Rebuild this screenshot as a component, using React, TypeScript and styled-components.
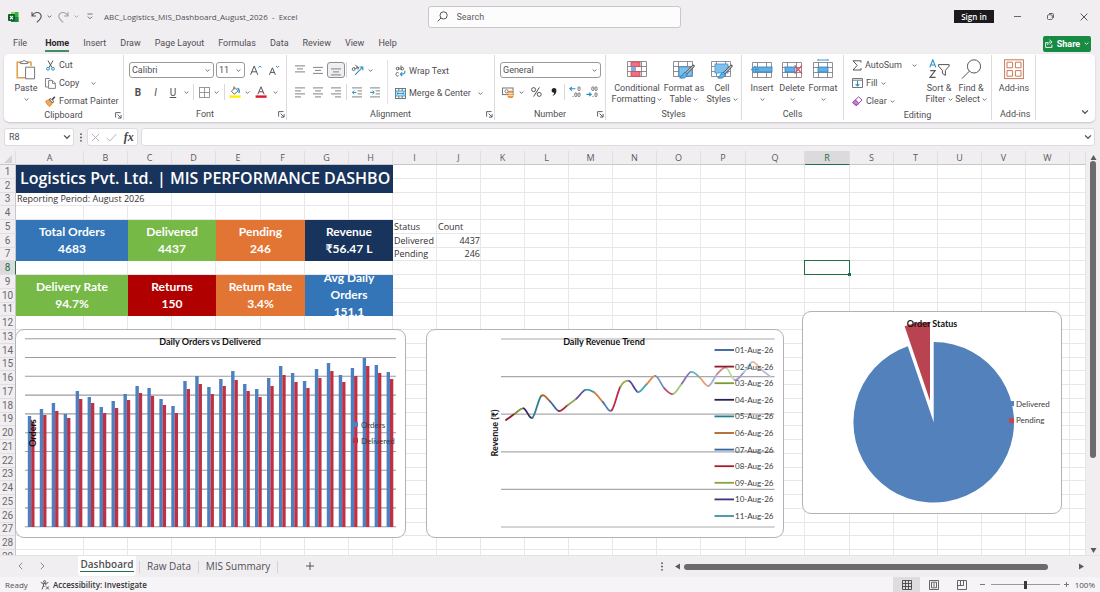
import React from "react";
import styled, { createGlobalStyle, css } from "styled-components";

const ui = `Roboto, "Open Sans", sans-serif`;
const cellFont = `"Open Sans", "Noto Sans", sans-serif`;
const sheetFont = `Lato, "Noto Sans", sans-serif`;
const green = "#1e7145";
const ink = "#504e52";
const line = "#767478";
const blue = "#2b8fc6";

const Global = createGlobalStyle`
  *, *::before, *::after { box-sizing: border-box; }
  html, body, #root { height: 100%; }
  body { margin: 0; background: #f1eef2; color: ${ink}; font-family: ${ui}; font-size: 9px; }
  button, input, select { font: inherit; color: inherit; margin: 0; }
  svg { display: block; flex: none; }
`;

/* ---------- shared pieces ---------- */

const Shell = styled.div`
  display: flex;
  flex-direction: column;
  height: 100vh;
  min-height: 360px;
  overflow: hidden;
`;

const Button = styled.button<{ $w?: number }>`
  display: inline-flex;
  align-items: center;
  justify-content: center;
  flex: none;
  width: ${(p) => (p.$w ? `${p.$w}px` : "auto")};
  height: 16px;
  padding: 0;
  border: 0;
  background: none;
  white-space: nowrap;
`;

const Row = styled.div<{ $gap?: number }>`
  display: flex;
  align-items: center;
  gap: ${(p) => p.$gap ?? 0}px;
`;

const Divider = styled.span<{ $h: number; $m: number }>`
  flex: none;
  width: 1px;
  height: ${(p) => p.$h}px;
  margin: 0 ${(p) => p.$m}px;
  background: #d9d7da;
`;

const Chevron = ({ size = 5, color = "#555" }: { size?: number; color?: string }) => (
  <svg width={size} height={size} viewBox="0 0 6 6" fill="none" stroke={color} strokeWidth="1">
    <path d="M0.8 1.8 3 4 5.2 1.8" />
  </svg>
);

/* ---------- title bar ---------- */

const TitleBar = styled.header`
  flex: none;
  display: grid;
  grid-template-columns: 1fr minmax(120px, 253px) 1fr;
  align-items: center;
  height: 33px;
  padding-left: 8px;
`;

const UndoButton = styled(Button)`
  margin-left: 8px;
`;

const FileName = styled.span`
  margin-left: 3px;
  font-family: ${cellFont};
  font-size: 8px;
  white-space: pre;
`;

const SearchBox = styled.label`
  display: flex;
  align-items: center;
  gap: 9px;
  height: 22px;
  padding: 0 8px;
  border: 1px solid #c9c7ca;
  border-radius: 3px;
  background: #fdfcfd;
  input {
    flex: 1;
    min-width: 0;
    padding: 0;
    border: 0;
    outline: 0;
    background: none;
  }
  input::placeholder { color: #5f5d61; opacity: 1; }
`;

const WindowControls = styled.div`
  display: flex;
  align-items: center;
  justify-content: flex-end;
`;

const SignIn = styled.button`
  height: 13px;
  width: 40px;
  margin-right: 7px;
  padding: 0;
  border: 0;
  background: #1c1a1e;
  color: #fff;
  font-family: ${cellFont};
  font-size: 8px;
  font-weight: 600;
  line-height: 13px;
`;

/* ---------- ribbon tabs ---------- */

const TabRow = styled.nav`
  flex: none;
  display: flex;
  align-items: center;
  gap: 14px;
  height: 21px;
  padding: 0 9px 0 13px;
`;

const MenuTab = styled.button<{ $active?: boolean }>`
  height: 17px;
  padding: 2px 0 0;
  border: 0;
  background: none;
  white-space: nowrap;
  line-height: 13px;
  border-bottom: 2px solid transparent;
  ${(p) =>
    p.$active &&
    css`
      font-weight: 700;
      color: #2a282c;
      border-bottom-color: #3f8f63;
    `}
`;

const FirstTab = styled(MenuTab)`
  margin-right: 4px;
`;

const Share = styled.button`
  display: flex;
  align-items: center;
  justify-content: center;
  gap: 4px;
  width: 48px;
  height: 16px;
  margin-left: auto;
  padding: 0;
  border: 0;
  border-radius: 2px;
  background: #178a43;
  color: #fff;
  font-weight: 700;
`;

/* ---------- ribbon ---------- */

const Ribbon = styled.section`
  flex: none;
  display: flex;
  height: 68px;
  margin: 0 5px 0 4px;
  padding: 1px 0 2px;
  border-radius: 5px;
  background: #fff;
  box-shadow: 0 1px 2px #c4c2c6;
`;

const Group = styled.div<{ $w: number }>`
  flex: none;
  display: flex;
  flex-direction: column;
  width: ${(p) => p.$w}px;
  border-right: 1px solid #dddbde;
`;

const GroupBody = styled.div<{ $pad: number }>`
  display: flex;
  height: 55px;
  padding-left: ${(p) => p.$pad}px;
`;

const GroupLabel = styled.div`
  display: grid;
  grid-template-columns: 8px 1fr 8px;
  align-items: center;
  height: 11px;
  line-height: 11px;
  text-align: center;
  white-space: nowrap;
`;

const Stack = styled.div<{ $gap?: number; $top?: number; $left?: number }>`
  display: flex;
  flex-direction: column;
  align-items: flex-start;
  gap: ${(p) => p.$gap ?? 0}px;
  padding-top: ${(p) => p.$top ?? 0}px;
  padding-left: ${(p) => p.$left ?? 0}px;
`;

const EditStack = styled(Stack)`
  width: 71px;
`;

const Command = styled(Button)`
  gap: 3px;
  height: 18px;
`;

const IconSlot = styled.span`
  display: flex;
  justify-content: center;
  width: 12px;
`;

const TallRule = styled.span`
  width: 1px;
  height: 44px;
  margin: 5px 7px 0 3px;
  background: #e2e0e3;
`;

const BigButton = styled.button<{ $w: number }>`
  display: flex;
  flex-direction: column;
  align-items: center;
  flex: none;
  width: ${(p) => p.$w}px;
  padding: 4px 0 0;
  border: 0;
  background: none;
  line-height: 11px;
  white-space: nowrap;
  svg.big { margin-bottom: 3px; }
`;

const LabelLine = styled.span`
  display: flex;
  align-items: center;
  gap: 2px;
  height: 11px;
`;

const SelectShell = styled.label<{ $w: number }>`
  display: flex;
  align-items: center;
  width: ${(p) => p.$w}px;
  height: 16px;
  padding: 0 3px 0 2px;
  border: 1px solid #9b999c;
  border-radius: 3px;
  background: #fff;
  select {
    flex: 1;
    min-width: 0;
    padding: 0;
    border: 0;
    outline: 0;
    background: none;
    appearance: none;
  }
`;

const Pressed = styled(Button)`
  border: 1px solid #8f8d90;
  border-radius: 3px;
  background: #efeef0;
`;

const Glyph = styled.span<{ $bold?: boolean; $italic?: boolean; $under?: boolean }>`
  font-size: 10px;
  font-weight: ${(p) => (p.$bold ? 700 : 400)};
  font-style: ${(p) => (p.$italic ? "italic" : "normal")};
  text-decoration: ${(p) => (p.$under ? "underline" : "none")};
`;

const CollapseCell = styled.div`
  display: flex;
  flex: 1;
  align-items: flex-end;
  justify-content: flex-end;
  padding-right: 5px;
`;

const Launcher = () => (
  <svg width="7" height="7" viewBox="0 0 7 7" fill="none" stroke="#555" strokeWidth="0.9">
    <path d="M0.6 5.6V0.6H5.6M2.6 2.6 6 6M6.1 3V6.1H3" />
  </svg>
);

const PasteIcon = () => (
  <svg className="big" width="20" height="21" viewBox="0 0 20 21" fill="none">
    <path d="M4.5 3.2H1.2V18.8H9M11.5 3.2H15V7" stroke="#e0a044" strokeWidth="1.5" />
    <path d="M4.4 4.6V2.8H6.3C6.6 1.2 9.6 1.2 9.9 2.8H11.8V4.6Z" stroke={line} fill="#fff" />
    <path d="M9.6 8.2H18.6V19.8H9.6Z" stroke={line} fill="#fff" />
  </svg>
);

const CutIcon = () => (
  <svg width="9" height="11" viewBox="0 0 9 11" fill="none">
    <path d="M2 0.5 6 7.6M7 0.5 3 7.6" stroke="#555" />
    <circle cx="2" cy="8.8" r="1.4" stroke={blue} />
    <circle cx="7" cy="8.8" r="1.4" stroke={blue} />
  </svg>
);

const CopyIcon = () => (
  <svg width="11" height="11" viewBox="0 0 11 11" fill="#fff" stroke={line} strokeWidth="0.9">
    <path d="M3.4 9H0.5V0.5H4.6L5.6 1.5" />
    <path d="M3.6 2.6H7.6L10.4 5.2V10.4H3.6Z" />
    <path d="M7.5 2.8V5.4H10.2" />
  </svg>
);

const PainterIcon = () => (
  <svg width="11" height="11" viewBox="0 0 11 11" fill="none">
    <path d="M0.6 5.2 4.4 3.6 7.6 6.8 5 10.4C3.4 10 1.4 8 0.6 5.2Z" fill="#f3a94f" stroke="#d2802a" strokeWidth="0.8" />
    <path d="M4.2 3.4 6 2.6 8.6 5.2 7.6 7Z" fill="#fff" stroke="#444" strokeWidth="0.9" />
    <path d="M7.2 3.8 9.8 0.8" stroke="#444" strokeWidth="1.6" />
  </svg>
);

const BordersIcon = () => (
  <svg width="11" height="11" viewBox="0 0 11 11" fill="none" stroke="#8f8d90" strokeWidth="0.9">
    <rect x="0.5" y="0.5" width="10" height="10" />
    <path d="M5.5 0.5V10.5M0.5 5.5H10.5" />
  </svg>
);

const FillIcon = () => (
  <svg width="12" height="12" viewBox="0 0 12 12" fill="none">
    <path d="M2.4 5.2 6 1.6 9 4.8 5.4 8.2Z" stroke="#555" strokeWidth="0.9" />
    <path d="M5 0.4V3.6" stroke="#555" strokeWidth="0.9" />
    <path d="M8.4 2.2C10.6 3 10.6 5.6 9.8 7" stroke={blue} strokeWidth="1.4" />
    <rect x="0.6" y="9.4" width="11" height="2.4" fill="#ffee00" />
  </svg>
);

const FontColorIcon = () => (
  <svg width="12" height="12" viewBox="0 0 12 12" fill="none">
    <path d="M2.8 8.4 6 0.8 9.2 8.4M4 5.8H8" stroke="#555" strokeWidth="1" />
    <rect x="0.6" y="9.4" width="11" height="2.4" fill="#e3162b" />
  </svg>
);

const GrowFont = ({ up }: { up?: boolean }) => (
  <svg width="12" height="11" viewBox="0 0 12 11" fill="none">
    <path d={up ? "M0.6 9.8 4.2 1 7.8 9.8M1.9 6.8H6.5" : "M1.4 9.8 4.4 2.8 7.4 9.8M2.4 7.4H6.4"} stroke="#555" />
    <path d={up ? "M8.4 2.6 9.9 1 11.4 2.6" : "M8 1 9.5 2.6 11 1"} stroke={blue} />
  </svg>
);

type LineSpec = [number, number, number];
const Lines = ({ rows }: { rows: LineSpec[] }) => (
  <svg width="10" height="11" viewBox="0 0 10 11" stroke={line} strokeWidth="0.9">
    {rows.map(([x1, x2, y]) => (
      <path key={y} d={`M${x1} ${y}H${x2}`} />
    ))}
  </svg>
);

const Indent = ({ right }: { right?: boolean }) => (
  <svg width="10" height="11" viewBox="0 0 10 11" fill="none">
    <path d="M0 0.9H10M5.6 3.9H10M5.6 6.9H10M0 9.9H10" stroke={line} strokeWidth="0.9" />
    <path d={right ? "M0 5.4H4M2.4 3.6 4.3 5.4 2.4 7.2" : "M4.4 5.4H0.6M2 3.6 0.4 5.4 2 7.2"} stroke={blue} />
  </svg>
);

const OrientationIcon = () => (
  <svg width="13" height="12" viewBox="0 0 13 12" fill="none">
    <circle cx="2.6" cy="5.2" r="1.4" stroke="#555" strokeWidth="0.9" />
    <path d="M3 3.2 4.8 5M4.4 0.8 7 4" stroke="#555" strokeWidth="0.9" />
    <circle cx="6.6" cy="4" r="1.1" stroke="#555" strokeWidth="0.8" />
    <path d="M4 10.8 11.4 3.4M8.6 3H11.8V6.2" stroke={blue} strokeWidth="1.1" />
  </svg>
);

const WrapIcon = () => (
  <svg width="11" height="12" viewBox="0 0 11 12" fill="none" stroke="#555" strokeWidth="0.9">
    <path d="M3.9 2.2V5M6 0.4V5" />
    <circle cx="2.5" cy="3.6" r="1.3" />
    <circle cx="7.3" cy="3.7" r="1.3" />
    <path d="M3.6 8C2.2 7 0.8 8 0.8 9.3S2.2 11.6 3.6 10.6" />
    <path d="M9.8 5.6C10.4 8 9.2 9.2 5.6 9.2M7.2 7.4 5.4 9.2 7.2 11" stroke={blue} strokeWidth="1.1" />
  </svg>
);

const MergeIcon = () => (
  <svg width="11" height="11" viewBox="0 0 11 11" fill="none">
    <rect x="0.5" y="0.5" width="10" height="10" stroke={line} fill="#fff" />
    <path d="M3.8 0.5V3M7.2 0.5V3M3.8 8V10.5M7.2 8V10.5" stroke={line} />
    <rect x="0.8" y="3" width="9.4" height="5" fill="#cfe8f7" stroke={blue} strokeWidth="0.8" />
    <path d="M2 5.5H9M3.4 4.2 2 5.5 3.4 6.8M7.6 4.2 9 5.5 7.6 6.8" stroke={blue} strokeWidth="0.9" />
  </svg>
);

const CurrencyIcon = () => (
  <svg width="12" height="11" viewBox="0 0 12 11" fill="none">
    <rect x="0.5" y="1" width="10.5" height="6.6" stroke={line} />
    <circle cx="4.6" cy="4.3" r="1.6" stroke={line} strokeWidth="0.9" />
    <rect x="6" y="4.2" width="5" height="6.2" rx="1" fill="#f1a04c" stroke="#d5781d" strokeWidth="0.8" />
    <path d="M6 6.4H11M6 8.4H11" stroke="#fff" strokeWidth="0.7" />
  </svg>
);

const PercentIcon = () => (
  <svg width="11" height="10" viewBox="0 0 11 10" fill="none" stroke="#555" strokeWidth="1">
    <circle cx="2.6" cy="2.6" r="2" />
    <circle cx="8.2" cy="7.4" r="2" />
    <path d="M8.4 0.4 2.6 9.6" />
  </svg>
);

const CommaIcon = () => (
  <svg width="6" height="10" viewBox="0 0 6 10" fill="#222">
    <path d="M3 1C4.7 1 5.6 2.2 5.4 4 5.2 6.4 3.6 8.4 1.4 9 2.6 7.8 3.2 6.6 3.2 5.6 1.6 5.8 0.6 4.8 0.6 3.4 0.6 2 1.6 1 3 1Z" />
  </svg>
);

const DecimalIcon = ({ right }: { right?: boolean }) => (
  <svg width="12" height="12" viewBox="0 0 12 12" fill="none" stroke="#666" strokeWidth="0.9">
    <rect x="9" y="0.8" width="2" height="3.8" rx="1" />
    {right && <rect x="5.8" y="0.8" width="2" height="3.8" rx="1" />}
    <rect x="9" y="6.8" width="2" height="3.8" rx="1" />
    {!right && <rect x="5.8" y="6.8" width="2" height="3.8" rx="1" />}
    <path d={right ? "M7 10V11" : "M4 10V11"} />
    <path d={right ? "M0.4 8.4H5M3.2 6.6 5.2 8.4 3.2 10.2" : "M6.4 2.8H1M2.8 1 0.8 2.8 2.8 4.6"} stroke={blue} strokeWidth="1.1" />
  </svg>
);

const gridPath = "M0.5 1.5H19.5V16.5H0.5ZM0.5 6.5H19.5M0.5 11.5H19.5M5.5 1.5V16.5M14.5 1.5V16.5";

const ConditionalIcon = () => (
  <svg className="big" width="20" height="21" viewBox="0 0 20 21" fill="none">
    <path d={gridPath} transform="translate(0 1)" stroke={line} strokeWidth="0.8" />
    <rect x="4" y="3" width="9" height="4.5" fill="#ee7183" stroke="#dc3f58" strokeWidth="0.8" />
    <rect x="4" y="7.8" width="5" height="4.4" fill="#6fb7e8" />
    <rect x="4" y="12.6" width="9" height="4.6" fill="#ee7183" stroke="#dc3f58" strokeWidth="0.8" />
  </svg>
);

const Brush = () => (
  <>
    <path d="M20.4 7 13 14.4" stroke="#555" strokeWidth="2.6" strokeLinecap="round" />
    <path d="M20.2 7.2 13.2 14.2" stroke="#fff" strokeWidth="1" strokeLinecap="round" />
    <path d="M12.8 13.4C10.4 12.8 10.2 16 6.6 18.8 10 20 14 18.8 14.2 15Z" fill="#5fb0e6" stroke="#2574ad" strokeWidth="0.8" />
  </>
);

const TableStyleIcon = ({ cell }: { cell?: boolean }) => (
  <svg className="big" width="22" height="21" viewBox="0 0 22 21" fill="none">
    <path d={gridPath} transform="translate(0 1)" stroke={line} strokeWidth="0.8" />
    {cell ? (
      <rect x="4" y="5" width="13" height="9" fill="#7dc0ee" stroke="#3f93cb" strokeWidth="0.8" />
    ) : (
      <path d="M6 8H19V17H6Z" fill="#7dc0ee" stroke="#3f93cb" strokeWidth="0.8" />
    )}
    <Brush />
  </svg>
);

const CellsIcon = ({ kind }: { kind: "insert" | "delete" | "format" }) => (
  <svg className="big" width="22" height="21" viewBox="0 0 22 21" fill="none">
    <path d={gridPath} transform="translate(1 2)" stroke={line} strokeWidth="0.8" />
    <rect x={kind === "format" ? 6 : 4} y="8" width={kind === "insert" ? 17 : 10} height="5" fill="#5fb0e6" stroke="#3182bd" strokeWidth="0.8" />
    {kind === "insert" && <path d="M8 10.5H1M4.4 7 0.8 10.5 4.4 14" stroke="#3d9bd4" strokeWidth="1.3" />}
    {kind === "delete" && <path d="M13.6 6.4 21 14.6M21 6.4 13.6 14.6" stroke="#e0475c" strokeWidth="1.3" />}
    {kind === "format" && <path d="M6 1H16M6 0V2M16 0V2" stroke="#3d9bd4" strokeWidth="1" />}
  </svg>
);

const SumIcon = () => (
  <svg width="10" height="11" viewBox="0 0 10 11" fill="none" stroke="#555">
    <path d="M9 2.6V0.8H1L5.2 5.4 1 10H9V8.2" />
  </svg>
);

const FillDownIcon = () => (
  <svg width="11" height="10" viewBox="0 0 11 10" fill="none">
    <path d="M0.5 0.5H10.5V9.5H0.5ZM0.5 2.2H10.5" stroke={line} />
    <path d="M5.5 3V8M3.6 6.2 5.5 8 7.4 6.2" stroke={blue} strokeWidth="1.1" />
  </svg>
);

const ClearIcon = () => (
  <svg width="11" height="10" viewBox="0 0 11 10" fill="none" stroke="#9b3fa8">
    <path d="M6.6 0.8 10 4 5 9.2H3.6L0.8 6.4Z" fill="#fff" />
    <path d="M3.4 3.8 6.8 7.2 5 9.2H3.6L0.8 6.4Z" fill="#c583cf" />
  </svg>
);

const SortIcon = () => (
  <svg className="big" width="21" height="21" viewBox="0 0 21 21" fill="none">
    <path d="M0.8 8.4 3.8 0.8 6.8 8.4M1.8 6H5.8" stroke={blue} strokeWidth="1.1" />
    <path d="M1.2 11.6H6.2L1 18.4H6.6" stroke="#555" strokeWidth="1.1" />
    <path d="M9.4 5.6H20.2V7L16.4 11.4V16.4L13.4 14.4V11.4L9.4 7Z" stroke="#555" />
  </svg>
);

const FindIcon = () => (
  <svg className="big" width="21" height="21" viewBox="0 0 21 21" fill="none" stroke="#555">
    <circle cx="13" cy="7.4" r="6.6" />
    <path d="M8.4 12.2 0.8 19.6" />
  </svg>
);

const AddinsIcon = () => (
  <svg className="big" width="20" height="21" viewBox="0 0 20 21" fill="none" stroke="#c67a59">
    <rect x="0.6" y="0.8" width="18.8" height="18.8" />
    <path d="M3 3.2H8.6V8.8H3ZM11.4 3.2H17V8.8H11.4ZM3 11.6H8.6V17.2H3ZM11.4 11.6H17V17.2H11.4Z" />
  </svg>
);

const top: LineSpec[] = [[0, 10, 0.9], [2, 8, 3.9], [0, 10, 6.9]];
const middle: LineSpec[] = [[0, 10, 2.4], [2, 8, 5.4], [0, 10, 8.4]];
const bottom: LineSpec[] = [[0, 10, 3.9], [2, 8, 6.9], [0, 10, 9.9]];
const left: LineSpec[] = [[0, 10, 0.9], [0, 6, 3.9], [0, 10, 6.9], [0, 6, 9.9]];
const center: LineSpec[] = [[0, 10, 0.9], [2, 8, 3.9], [0, 10, 6.9], [2, 8, 9.9]];
const right: LineSpec[] = [[0, 10, 0.9], [4, 10, 3.9], [0, 10, 6.9], [4, 10, 9.9]];

interface GroupProps {
  name: string;
  width: number;
  pad: number;
  launcher?: boolean;
  children: React.ReactNode;
}
const RibbonGroup = ({ name, width, pad, launcher, children }: GroupProps) => (
  <Group $w={width} role="group" aria-label={name}>
    <GroupBody $pad={pad}>{children}</GroupBody>
    <GroupLabel>
      <span />
      <span>{name}</span>
      {launcher && <Launcher />}
    </GroupLabel>
  </Group>
);

const Big = ({ w, icon, lines }: { w: number; icon: React.ReactNode; lines: (string | null)[] }) => (
  <BigButton $w={w}>
    {icon}
    <LabelLine>{lines[0]}</LabelLine>
    {lines.length === 2 && (
      <LabelLine>
        {lines[1]}
        <Chevron />
      </LabelLine>
    )}
  </BigButton>
);

const RibbonBar = () => (
  <Ribbon>
    <RibbonGroup name="Clipboard" width={120} pad={8} launcher>
      <Big w={28} icon={<PasteIcon />} lines={["Paste", null]} />
      <Stack $left={4} $top={1}>
        <Command><IconSlot><CutIcon /></IconSlot>Cut</Command>
        <Row $gap={12}>
          <Command><IconSlot><CopyIcon /></IconSlot>Copy</Command>
          <Chevron />
        </Row>
        <Command><IconSlot><PainterIcon /></IconSlot>Format Painter</Command>
      </Stack>
    </RibbonGroup>

    <RibbonGroup name="Font" width={163} pad={5} launcher>
      <Stack $gap={6} $top={7}>
        <Row $gap={2}>
          <SelectShell $w={85}>
            <select aria-label="Font"><option>Calibri</option></select>
            <Chevron />
          </SelectShell>
          <SelectShell $w={29}>
            <select aria-label="Font size"><option>11</option></select>
            <Chevron />
          </SelectShell>
          <Button $w={17} aria-label="Increase font size"><GrowFont up /></Button>
          <Button $w={16} aria-label="Decrease font size"><GrowFont /></Button>
        </Row>
        <Row>
          <Button $w={18}><Glyph $bold>B</Glyph></Button>
          <Button $w={17}><Glyph $italic>I</Glyph></Button>
          <Button $w={18}><Glyph $under>U</Glyph></Button>
          <Button $w={8} aria-label="Underline options"><Chevron /></Button>
          <Divider $h={16} $m={3} />
          <Button $w={14} aria-label="Borders"><BordersIcon /></Button>
          <Button $w={10} aria-label="Border options"><Chevron /></Button>
          <Divider $h={16} $m={3} />
          <Button $w={14} aria-label="Fill colour"><FillIcon /></Button>
          <Button $w={10} aria-label="Fill options"><Chevron /></Button>
          <Button $w={18} aria-label="Font colour"><FontColorIcon /></Button>
          <Button $w={10} aria-label="Font colour options"><Chevron /></Button>
        </Row>
      </Stack>
    </RibbonGroup>

    <RibbonGroup name="Alignment" width={208} pad={4} launcher>
      <Stack $gap={6} $top={7}>
        <Row>
          <Button $w={18} aria-label="Top align"><Lines rows={top} /></Button>
          <Button $w={18} aria-label="Middle align"><Lines rows={middle} /></Button>
          <Pressed $w={18} aria-label="Bottom align"><Lines rows={bottom} /></Pressed>
          <Divider $h={16} $m={1} />
          <Button $w={18} aria-label="Orientation"><OrientationIcon /></Button>
          <Button $w={8} aria-label="Orientation options"><Chevron /></Button>
        </Row>
        <Row>
          <Button $w={18} aria-label="Align left"><Lines rows={left} /></Button>
          <Button $w={18} aria-label="Centre"><Lines rows={center} /></Button>
          <Button $w={18} aria-label="Align right"><Lines rows={right} /></Button>
          <Divider $h={16} $m={1} />
          <Button $w={18} aria-label="Decrease indent"><Indent /></Button>
          <Button $w={18} aria-label="Increase indent"><Indent right /></Button>
        </Row>
      </Stack>
      <TallRule />
      <Stack $gap={4} $top={7}>
        <Command><WrapIcon />Wrap Text</Command>
        <Row $gap={7}>
          <Command><MergeIcon />Merge &amp; Center</Command>
          <Chevron />
        </Row>
      </Stack>
    </RibbonGroup>

    <RibbonGroup name="Number" width={111} pad={5} launcher>
      <Stack $gap={6} $top={7}>
        <SelectShell $w={101}>
          <select aria-label="Number format"><option>General</option></select>
          <Chevron />
        </SelectShell>
        <Row>
          <Button $w={16} aria-label="Accounting format"><CurrencyIcon /></Button>
          <Button $w={10} aria-label="Accounting options"><Chevron /></Button>
          <Button $w={20} aria-label="Percent"><PercentIcon /></Button>
          <Button $w={16} aria-label="Comma"><CommaIcon /></Button>
          <Divider $h={16} $m={2} />
          <Button $w={16} aria-label="Increase decimal"><DecimalIcon /></Button>
          <Button $w={18} aria-label="Decrease decimal"><DecimalIcon right /></Button>
        </Row>
      </Stack>
    </RibbonGroup>

    <RibbonGroup name="Styles" width={136} pad={6}>
      <Big w={50} icon={<ConditionalIcon />} lines={["Conditional", "Formatting"]} />
      <Big w={44} icon={<TableStyleIcon />} lines={["Format as", "Table"]} />
      <Big w={32} icon={<TableStyleIcon cell />} lines={["Cell", "Styles"]} />
    </RibbonGroup>

    <RibbonGroup name="Cells" width={102} pad={5}>
      <Big w={30} icon={<CellsIcon kind="insert" />} lines={["Insert", null]} />
      <Big w={30} icon={<CellsIcon kind="delete" />} lines={["Delete", null]} />
      <Big w={32} icon={<CellsIcon kind="format" />} lines={["Format", null]} />
    </RibbonGroup>

    <RibbonGroup name="Editing" width={148} pad={8}>
      <EditStack $top={1}>
        <Row $gap={10}>
          <Command><SumIcon />AutoSum</Command>
          <Chevron />
        </Row>
        <Command><FillDownIcon />Fill<Chevron /></Command>
        <Command><ClearIcon />Clear<Chevron /></Command>
      </EditStack>
      <Big w={32} icon={<SortIcon />} lines={["Sort &", "Filter"]} />
      <Big w={32} icon={<FindIcon />} lines={["Find &", "Select"]} />
    </RibbonGroup>

    <RibbonGroup name="Add-ins" width={44} pad={4}>
      <Big w={36} icon={<AddinsIcon />} lines={["Add-ins"]} />
    </RibbonGroup>

    <CollapseCell>
      <Button $w={10} aria-label="Collapse ribbon"><Chevron size={8} /></Button>
    </CollapseCell>
  </Ribbon>
);

/* ---------- formula bar ---------- */

const FormulaRow = styled.div`
  flex: none;
  display: flex;
  align-items: center;
  gap: 3px;
  height: 18px;
  margin: 6px 5px 5px 4px;
`;

const Field = styled.label<{ $w?: number }>`
  display: flex;
  align-items: center;
  flex: ${(p) => (p.$w ? "none" : 1)};
  width: ${(p) => (p.$w ? `${p.$w}px` : "auto")};
  height: 18px;
  padding: 0 2px 0 4px;
  border: 1px solid #dddbde;
  border-radius: 3px;
  background: #fff;
  input {
    flex: 1;
    min-width: 0;
    padding: 0;
    border: 0;
    outline: 0;
    background: none;
  }
`;

const FxBox = styled.div`
  display: flex;
  align-items: center;
  justify-content: space-around;
  width: 51px;
  height: 18px;
  border: 1px solid #dddbde;
  border-radius: 3px;
  background: #fff;
`;

const Fx = styled.span`
  font: italic 700 12px/14px "Liberation Serif", serif;
  color: #444;
`;

const Dots = () => (
  <svg width="4" height="9" viewBox="0 0 4 9" fill="#555">
    <circle cx="2" cy="1.2" r="0.9" />
    <circle cx="2" cy="4.5" r="0.9" />
    <circle cx="2" cy="7.8" r="0.9" />
  </svg>
);

/* ---------- worksheet ---------- */

const Work = styled.main`
  flex: 1;
  display: flex;
  min-height: 0;
`;

const Canvas = styled.div`
  position: relative;
  flex: 1;
  min-width: 0;
  overflow: hidden;
  background: #fff;
`;

const Sheet = styled.table`
  width: 100%;
  table-layout: fixed;
  border-collapse: separate;
  border-spacing: 0;
  font-family: ${cellFont};
  font-size: 9px;
  line-height: 12px;
  th, td { padding: 0; white-space: nowrap; }
`;

const ColHead = styled.th<{ $on?: boolean }>`
  height: 14px;
  font: 400 9px/13px ${cellFont};
  background: ${(p) => (p.$on ? "#dcdadd" : "#f1eef2")};
  color: ${(p) => (p.$on ? green : "#5a585c")};
  border-right: 1px solid #e0dee1;
  border-bottom: 1px solid ${(p) => (p.$on ? green : "#c8c6c9")};
`;

const RowHead = styled.th<{ $on?: boolean }>`
  font: 400 10px/12px ${ui};
  background: ${(p) => (p.$on ? "#dcdadd" : "#f1eef2")};
  color: ${(p) => (p.$on ? green : "#6a686c")};
  border-right: 1px solid ${(p) => (p.$on ? green : "#c8c6c9")};
  border-bottom: 1px solid #e0dee1;
`;

const Cell = styled.td<{ $num?: boolean; $on?: boolean }>`
  border-right: 1px solid #e8e6e9;
  border-bottom: 1px solid #e8e6e9;
  text-align: ${(p) => (p.$num ? "right" : "left")};
  color: #333135;
  && { padding: 0 0 0 1px; }
  ${(p) =>
    p.$on &&
    css`
      position: relative;
      &::after {
        content: "";
        position: absolute;
        inset: -1px;
        border: 1px solid ${green};
      }
      &::before {
        content: "";
        position: absolute;
        right: -2px;
        bottom: -2px;
        z-index: 1;
        width: 3px;
        height: 3px;
        background: ${green};
      }
    `}
`;

const Banner = styled.div`
  height: 28px;
  padding-left: 4px;
  overflow: hidden;
  background: #18335c;
  color: #fff;
  font-size: 16px;
  font-weight: 600;
  line-height: 27px;
`;

const Kpi = styled.div<{ $bg: string }>`
  display: flex;
  flex-direction: column;
  align-items: center;
  justify-content: center;
  height: 41px;
  padding-bottom: 2px;
  overflow: hidden;
  background: ${(p) => p.$bg};
  color: #fff;
  font-family: ${sheetFont};
  font-size: 12px;
  font-weight: 700;
  line-height: 17px;
`;

const letters = "ABCDEFGHIJKLMNOPQRSTUVW".split("");
const widths = [68, 44, 44, 44, 45, 44, 44, 44, 44, 44, 44, 44, 44, 44, 44, 45, 59, 45, 44, 44, 44, 44, 44];
const rowHeights = [14, 14, 13, 14];

const kpis: Record<number, [string[], string][]> = {
  5: [
    [["Total Orders", "4683"], "#3375b6"],
    [["Delivered", "4437"], "#76b947"],
    [["Pending", "246"], "#e37534"],
    [["Revenue", "₹56.47 L"], "#18335c"],
  ],
  9: [
    [["Delivery Rate", "94.7%"], "#76b947"],
    [["Returns", "150"], "#b00000"],
    [["Return Rate", "3.4%"], "#e37534"],
    [["Avg Daily", "Orders", "151.1"], "#3375b6"],
  ],
};

const values: Record<string, string> = {
  I5: "Status", J5: "Count", I6: "Delivered", J6: "4437", I7: "Pending", J7: "246",
};

const covered = (row: number, col: number) =>
  (col < 8 && [1, 2, 5, 6, 7, 9, 10, 11].includes(row)) || (row === 3 && col < 3);

const SheetGrid = () => (
  <Sheet>
    <colgroup>
      <col width={16} />
      {widths.map((w, i) => <col key={i} width={w} />)}
      <col />
    </colgroup>
    <thead>
      <tr>
        <ColHead aria-label="Select all">
          <svg width="13" height="12" viewBox="0 0 13 12" fill="#d3d1d4"><path d="M12 3V11H4Z" /></svg>
        </ColHead>
        {letters.map((l) => <ColHead key={l} $on={l === "R"}>{l}</ColHead>)}
        <ColHead />
      </tr>
    </thead>
    <tbody>
      {Array.from({ length: 29 }, (_, i) => i + 1).map((r) => (
        <tr key={r} style={{ height: rowHeights[(r - 1) % 4] }}>
          <RowHead $on={r === 8}>{r}</RowHead>
          {r === 1 && (
            <td colSpan={8} rowSpan={2}><Banner>Logistics Pvt. Ltd. | MIS PERFORMANCE DASHBO</Banner></td>
          )}
          {r === 3 && <Cell colSpan={3}>Reporting Period: August 2026</Cell>}
          {kpis[r]?.map(([text, bg], k) => (
            <td key={k} colSpan={2} rowSpan={3}>
              <Kpi $bg={bg}>{text.map((t) => <span key={t}>{t}</span>)}</Kpi>
            </td>
          ))}
          {letters.map((l, c) =>
            covered(r, c) ? null : (
              <Cell key={l} $num={l === "J" && r > 5} $on={l === "R" && r === 8}>{values[l + r]}</Cell>
            )
          )}
          <Cell />
        </tr>
      ))}
    </tbody>
  </Sheet>
);

/* ---------- charts ---------- */

const ChartFrame = styled.figure<{ $x: number; $y: number; $w: number; $h: number }>`
  position: absolute;
  left: ${(p) => p.$x}px;
  top: ${(p) => p.$y}px;
  width: ${(p) => p.$w}px;
  height: ${(p) => p.$h}px;
  margin: 0;
  border: 1px solid #b4b2b5;
  border-radius: 9px;
  background: #fff;
  svg { font-family: ${sheetFont}; font-size: 8px; fill: #3c3a3e; }
  .title { font-size: 9px; font-weight: 700; fill: #111; }
`;

const orders = [
  [111, 105], [118, 112], [124, 116], [113, 109], [136, 128], [130, 124], [120, 114], [126, 119],
  [133, 127], [141, 134], [139, 131], [128, 122], [121, 114], [146, 138], [151, 143], [140, 133],
  [148, 141], [156, 147], [143, 136], [138, 130], [149, 141], [161, 152], [154, 145], [146, 139],
  [158, 149], [164, 156], [152, 145], [159, 151], [169, 161], [162, 154], [155, 148],
];

const OrdersChart = () => (
  <ChartFrame $x={15} $y={178} $w={391} $h={209}>
    <svg width="389" height="207" viewBox="16 330 389 207">
      {Array.from({ length: 11 }, (_, i) => (
        <path key={i} d={`M25 ${338.7 + i * 18.8}H396`} stroke="#9d9b9e" strokeWidth="1.1" />
      ))}
      {orders.map(([o, d], i) => (
        <g key={i}>
          <rect x={27.8 + i * 11.96} y={527 - o} width="3.4" height={o} fill="#4c80bf" />
          <rect x={31.2 + i * 11.96} y={527 - d} width="3.3" height={d} fill="#c02f42" />
        </g>
      ))}
      <text className="title" x="210" y="345" textAnchor="middle">Daily Orders vs Delivered</text>
      <text className="title" transform="translate(36 433) rotate(-90)" textAnchor="middle">Orders</text>
      <rect x="353" y="422" width="5" height="5" fill="#4c80bf" />
      <rect x="353" y="438" width="5" height="5" fill="#c02f42" />
      <text x="361" y="428">Orders</text>
      <text x="361" y="444">Delivered</text>
    </svg>
  </ChartFrame>
);

const trend = [
  300, 281, 265, 293, 228, 244, 273, 256, 236, 210, 217, 246, 271, 200, 183, 216, 192, 168, 205, 222,
  190, 156, 172, 198, 162, 143, 180, 158, 126, 148, 169,
].map((v, i) => [506 + i * 8.8, 320 + v / 3]);

const trendColors = [
  "#8a1c33", "#7b963a", "#3d2a6b", "#2a8390", "#b3632b", "#3b68a4", "#ad2440", "#86a847", "#64489a", "#379bad",
  "#cf7d3c", "#4a7bc0", "#bd2c45", "#8fb552", "#5a3f9b", "#43a8c0", "#e0884c", "#6b8fc9", "#b85263", "#a6c37c",
  "#8a70b2", "#62b2c9", "#ee9964", "#a0b1d9", "#cf8594", "#bfd7a2", "#a493c4", "#9fd0e0", "#f1b798", "#b9bddd",
];

const segment = (i: number) => {
  const p = (k: number) => trend[Math.max(0, Math.min(trend.length - 1, k))];
  const [a, b, c, d] = [p(i - 1), p(i), p(i + 1), p(i + 2)];
  return `M${b[0]} ${b[1]}C${b[0] + (c[0] - a[0]) / 6} ${b[1] + (c[1] - a[1]) / 6} ${c[0] - (d[0] - b[0]) / 6} ${
    c[1] - (d[1] - b[1]) / 6
  } ${c[0]} ${c[1]}`;
};

const legendColors = [
  "#2f5f9a", "#8f1a2c", "#7a9a38", "#2c1f5c", "#1f7f8c", "#b0622a", "#2f66a8", "#a81c30", "#86a63c", "#45307c", "#3a93a8",
];

const TrendChart = () => (
  <ChartFrame $x={426} $y={178} $w={358} $h={209}>
    <svg width="356" height="207" viewBox="427 330 356 207">
      {Array.from({ length: 6 }, (_, i) => (
        <path key={i} d={`M501 ${339 + i * 37.6}H774.5`} stroke="#aaa8ab" strokeWidth="1.2" />
      ))}
      {trendColors.map((c, i) => (
        <path key={i} d={segment(i)} stroke={c} strokeWidth="1.8" fill="none" strokeLinecap="round" />
      ))}
      <text className="title" x="604" y="345" textAnchor="middle">Daily Revenue Trend</text>
      <text className="title" transform="translate(498 433) rotate(-90)" textAnchor="middle">Revenue (₹)</text>
      {legendColors.map((c, i) => (
        <g key={c}>
          <path d={`M714.5 ${350 + i * 16.6}H734`} stroke={c} strokeWidth="1.8" />
          <text x="735" y={353 + i * 16.6}>{`${String(i + 1).padStart(2, "0")}-Aug-26`}</text>
        </g>
      ))}
    </svg>
  </ChartFrame>
);

const StatusChart = () => (
  <ChartFrame $x={802} $y={160} $w={260} $h={203}>
    <svg width="258" height="201" viewBox="803 312 258 201">
      <path d="M933.7 422.3V342A80.3 80.3 0 1 1 907.8 346.3Z" fill="#5381bc" />
      <path d="M930 400.7V322A80 80 0 0 0 904.6 326.2Z" fill="#b94350" />
      <text className="title" x="932" y="327" textAnchor="middle">Order Status</text>
      <rect x="1009" y="401" width="5" height="5" fill="#5381bc" />
      <rect x="1009" y="418" width="5" height="5" fill="#c24654" />
      <text x="1016" y="407">Delivered</text>
      <text x="1016" y="423">Pending</text>
    </svg>
  </ChartFrame>
);

/* ---------- scroll bars, sheet tabs, status ---------- */

const VScroll = styled.div`
  flex: none;
  display: flex;
  flex-direction: column;
  align-items: center;
  width: 14px;
  padding: 3px 0 1px;
`;

const Track = styled.div<{ $h?: boolean }>`
  flex: 1;
  display: flex;
  flex-direction: ${(p) => (p.$h ? "row" : "column")};
`;

const Thumb = styled.div<{ $h?: boolean }>`
  width: ${(p) => (p.$h ? "93%" : "6px")};
  height: ${(p) => (p.$h ? "6px" : "77%")};
  border-radius: 3px;
  background: #6c6a6d;
`;

const Arrow = ({ d }: { d: string }) => (
  <svg width="7" height="7" viewBox="0 0 7 7" fill="#5c5a5d"><path d={d} /></svg>
);

const TabStrip = styled.div`
  flex: none;
  display: grid;
  grid-template-columns: 59.5% 1fr;
  height: 22px;
  border-top: 1px solid #e4e2e5;
`;

const SheetTabs = styled.nav`
  display: flex;
  align-items: flex-start;
  padding-left: 15px;
`;

const SheetTab = styled.button<{ $w: number; $active?: boolean }>`
  flex: none;
  width: ${(p) => p.$w}px;
  height: 20px;
  padding: ${(p) => (p.$active ? "0 0 3px" : "1px 0 0")};
  border: 0;
  background: ${(p) => (p.$active ? "#fff" : "none")};
  border-radius: 0 0 3px 3px;
  font-family: ${cellFont};
  font-size: 10px;
  font-weight: ${(p) => (p.$active ? 600 : 400)};
  white-space: nowrap;
  span {
    display: inline-block;
    line-height: 14px;
    border-bottom: 1px solid ${(p) => (p.$active ? green : "transparent")};
  }
`;

const TabRule = styled.span<{ $lead?: boolean }>`
  width: 1px;
  height: 12px;
  margin: ${(p) => (p.$lead ? "5px 0 0 3px" : "5px 0 0")};
  background: #d5d3d6;
`;

const NavButtons = styled.div`
  display: flex;
  align-items: center;
  gap: 12px;
  height: 20px;
  margin-right: 31px;
`;

const AddSheet = styled(Button)`
  height: 20px;
`;

const HScroll = styled.div`
  display: flex;
  align-items: center;
  gap: 3px;
  padding: 0 15px 0 5px;
`;

const DotsSlot = styled.span`
  padding-right: 7px;
`;

const StatusBar = styled.footer`
  flex: none;
  display: flex;
  align-items: center;
  height: 15px;
  padding: 0 5px;
  background: #f6f4f7;
  font-family: ${cellFont};
  font-size: 8px;
`;

const Ready = styled.span`
  width: 35px;
`;

const Accessibility = styled.span`
  margin: 0 auto 0 3px;
  font-weight: 600;
  color: #333;
`;

const ViewButton = styled(Button)<{ $active?: boolean }>`
  height: 15px;
  background: ${(p) => (p.$active ? "#dedcdf" : "none")};
`;

const Zoom = styled.input`
  width: 69px;
  height: 12px;
  appearance: none;
  background: linear-gradient(#9a989b, #9a989b) center / 100% 1px no-repeat;
  &&& { margin: 0 3px; }
  &::-webkit-slider-thumb {
    appearance: none;
    width: 3px;
    height: 8px;
    background: #3a383b;
  }
`;

const Value = styled.span`
  width: 26px;
  text-align: right;
`;

const ExcelLogo = () => (
  <svg width="11" height="12" viewBox="0 0 11 12">
    <path d="M3 1H10.5V11H3Z" fill="#3fae49" />
    <path d="M3 1H7V4H3Z" fill="#8bd44f" />
    <path d="M6 6H10.5V11H3V8Z" fill="#1c8a3c" />
    <rect x="0" y="3" width="7" height="7" rx="1" fill="#0e5c2b" />
    <path d="M2 4.8 5 8.4M5 4.8 2 8.4" stroke="#fff" strokeWidth="1.1" />
  </svg>
);

const UndoIcon = ({ redo }: { redo?: boolean }) => (
  <svg width="12" height="12" viewBox="0 0 12 12" fill="none" stroke={redo ? "#a5a3a6" : "#555"} strokeWidth="1.1">
    <g transform={redo ? "matrix(-1 0 0 1 12 0)" : undefined}>
      <path d="M1 1V5H5M1.2 4.8C3.4 1 7 0.8 8.8 2.4 10.8 4.4 10.2 7 8.4 8.8L5.8 11.4" />
    </g>
  </svg>
);

const menu = ["Home", "Insert", "Draw", "Page Layout", "Formulas", "Data", "Review", "View", "Help"];

export default function App() {
  return (
    <Shell>
      <Global />
      <TitleBar>
        <Row>
          <ExcelLogo />
          <UndoButton $w={20} aria-label="Undo"><UndoIcon /></UndoButton>
          <Chevron />
          <Button $w={22} aria-label="Redo"><UndoIcon redo /></Button>
          <Chevron color="#999" />
          <Button $w={22} aria-label="Customise toolbar">
            <svg width="6" height="7" viewBox="0 0 6 7" fill="none" stroke="#666" strokeWidth="0.9"><path d="M0.4 1H5.6M0.8 3.6 3 5.8 5.2 3.6" /></svg>
          </Button>
          <FileName>ABC_Logistics_MIS_Dashboard_August_2026  -  Excel</FileName>
        </Row>
        <SearchBox>
          <svg width="11" height="11" viewBox="0 0 11 11" fill="none" stroke="#555"><circle cx="6.6" cy="4.4" r="3.6" /><path d="M4 7 0.6 10.4" /></svg>
          <input placeholder="Search" aria-label="Search" />
        </SearchBox>
        <WindowControls>
          <SignIn>Sign in</SignIn>
          <Button $w={33} aria-label="Minimise"><svg width="7" height="7" viewBox="0 0 7 7" stroke="#666"><path d="M0 3.5H7" /></svg></Button>
          <Button $w={33} aria-label="Restore"><svg width="7" height="7" viewBox="0 0 7 7" fill="none" stroke="#555" strokeWidth="0.9"><rect x="0.5" y="1.8" width="4.8" height="4.8" rx="1" /><path d="M2 0.5H5.4Q6.5 0.5 6.5 1.6V5" /></svg></Button>
          <Button $w={33} aria-label="Close"><svg width="8" height="8" viewBox="0 0 8 8" stroke="#555"><path d="M0.6 0.6 7.4 7.4M7.4 0.6 0.6 7.4" /></svg></Button>
        </WindowControls>
      </TitleBar>

      <TabRow>
        <FirstTab>File</FirstTab>
        {menu.map((m) => <MenuTab key={m} $active={m === "Home"}>{m}</MenuTab>)}
        <Share>
          <svg width="8" height="9" viewBox="0 0 8 9" fill="none" stroke="#fff" strokeWidth="0.9"><path d="M3 3.6H0.6V8.4H7V5.6M2.6 6C2.8 3.6 4 3 5.4 3M4.4 0.8 7 3 4.4 5.2" /></svg>
          Share
          <Chevron color="#fff" />
        </Share>
      </TabRow>

      <RibbonBar />

      <FormulaRow>
        <Field $w={70}>
          <input aria-label="Name box" defaultValue="R8" />
          <Chevron size={8} />
        </Field>
        <Button $w={7} aria-label="Resize name box"><Dots /></Button>
        <FxBox>
          <svg width="9" height="9" viewBox="0 0 9 9" stroke="#b5b3b6"><path d="M0.8 0.8 8.2 8.2M8.2 0.8 0.8 8.2" /></svg>
          <svg width="11" height="9" viewBox="0 0 11 9" fill="none" stroke="#b5b3b6"><path d="M0.6 4.8 3.8 8 10.4 1" /></svg>
          <Fx>fx</Fx>
        </FxBox>
        <Field>
          <input aria-label="Formula" />
          <Chevron size={8} />
        </Field>
      </FormulaRow>

      <Work>
        <Canvas>
          <SheetGrid />
          <OrdersChart />
          <TrendChart />
          <StatusChart />
        </Canvas>
        <VScroll>
          <Arrow d="M3.5 1 6.5 6H0.5Z" />
          <Track>
            <Thumb />
          </Track>
          <Arrow d="M3.5 6 6.5 1H0.5Z" />
        </VScroll>
      </Work>

      <TabStrip>
        <SheetTabs>
          <NavButtons>
            <Button $w={10} aria-label="Previous sheet"><svg width="5" height="8" viewBox="0 0 5 8" fill="none" stroke="#8a888b"><path d="M4.2 0.8 1 4 4.2 7.2" /></svg></Button>
            <Button $w={10} aria-label="Next sheet"><svg width="5" height="8" viewBox="0 0 5 8" fill="none" stroke="#8a888b"><path d="M0.8 0.8 4 4 0.8 7.2" /></svg></Button>
          </NavButtons>
          <SheetTab $w={58} $active><span>Dashboard</span></SheetTab>
          <TabRule $lead />
          <SheetTab $w={58}><span>Raw Data</span></SheetTab>
          <TabRule />
          <SheetTab $w={78}><span>MIS Summary</span></SheetTab>
          <TabRule />
          <AddSheet $w={64} aria-label="New sheet"><svg width="8" height="8" viewBox="0 0 8 8" stroke="#555"><path d="M4 0V8M0 4H8" /></svg></AddSheet>
        </SheetTabs>
        <HScroll>
          <DotsSlot><Dots /></DotsSlot>
          <Arrow d="M1 3.5 6 0.5V6.5Z" />
          <Track $h>
            <Thumb $h />
          </Track>
          <Arrow d="M6 3.5 1 0.5V6.5Z" />
        </HScroll>
      </TabStrip>

      <StatusBar>
        <Ready>Ready</Ready>
        <svg width="10" height="10" viewBox="0 0 10 10" fill="none" stroke="#444" strokeWidth="0.9">
          <circle cx="4.6" cy="1.6" r="1" />
          <path d="M0.8 2.4 3.4 3.6H5.8L8.4 2.4M3.4 3.6V6L2 9.4M5.8 3.6V5.4M3.4 6 4.6 6.4M6 6.4 9 9.4M9 6.4 6 9.4" />
        </svg>
        <Accessibility>Accessibility: Investigate</Accessibility>
        <ViewButton $w={27} $active aria-label="Normal view"><svg width="10" height="10" viewBox="0 0 10 10" fill="none" stroke="#444" strokeWidth="0.9"><path d="M0.5 0.5H9.5V9.5H0.5ZM0.5 3.5H9.5M0.5 6.5H9.5M3.5 0.5V9.5M6.5 0.5V9.5" /></svg></ViewButton>
        <ViewButton $w={28} aria-label="Page layout view"><svg width="10" height="10" viewBox="0 0 10 10" fill="none" stroke="#555" strokeWidth="0.9"><path d="M0.5 0.5H9.5V9.5H0.5ZM2.5 2.2H7.5V7.8H2.5ZM4 4H6M4 6H6" /></svg></ViewButton>
        <ViewButton $w={28} aria-label="Page break view"><svg width="10" height="10" viewBox="0 0 10 10" fill="none" stroke="#555" strokeWidth="0.9"><path d="M0.5 0.5H9.5V9.5H0.5ZM0.5 5.5H6.5V0.5M3.5 0.5V5.5" /></svg></ViewButton>
        <Button $w={12} aria-label="Zoom out"><svg width="5" height="5" viewBox="0 0 5 5" stroke="#777"><path d="M0 2.5H5" /></svg></Button>
        <Zoom type="range" aria-label="Zoom" defaultValue={50} />
        <Button $w={6} aria-label="Zoom in"><svg width="5" height="5" viewBox="0 0 5 5" stroke="#777"><path d="M0 2.5H5M2.5 0V5" /></svg></Button>
        <Value>100%</Value>
      </StatusBar>
    </Shell>
  );
}
